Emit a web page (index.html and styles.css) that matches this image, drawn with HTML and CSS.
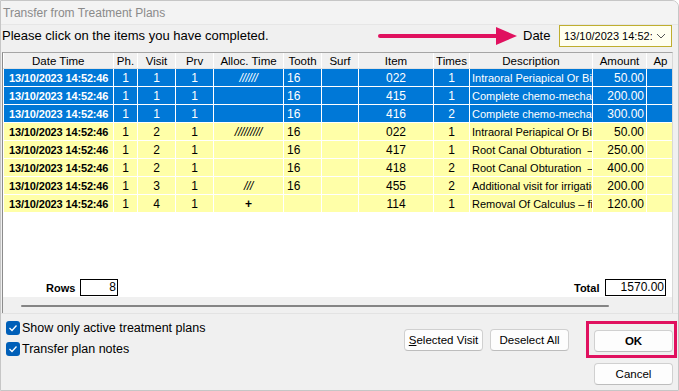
FILE: index.html
```html
<!DOCTYPE html>
<html lang="en">
<head>
    <meta charset="UTF-8">
    <title>Transfer from Treatment Plans</title>
    <link rel="stylesheet" href="styles.css">
</head>
<body>
<div id="wrap">
    <div id="titlebar">Transfer from Treatment Plans</div>
    <div id="toolbar">
        <span class="hint">Please click on the items you have completed.</span>
        <svg class="arrow" width="140" height="20" viewBox="0 0 140 20">
            <line x1="2" y1="10" x2="122" y2="10" stroke="#e0115f" stroke-width="4" stroke-linecap="round"/>
            <polygon points="118,1 139,10 118,19" fill="#e0115f"/>
        </svg>
        <span class="date-label">Date</span>
        <div class="combo">
            <span>13/10/2023 14:52:</span>
            <svg width="10" height="6" viewBox="0 0 10 6"><polyline points="1,1 5,5 9,1" fill="none" stroke="#555" stroke-width="1"/></svg>
        </div>
    </div>

    <div id="grid">
        <div class="view">
            <table class="plans">
                <colgroup>
                    <col style="width:110px"><col style="width:24px"><col style="width:38px"><col style="width:38px">
                    <col style="width:70px"><col style="width:38px"><col style="width:37px"><col style="width:75px">
                    <col style="width:36px"><col style="width:123px"><col style="width:54px"><col style="width:28px">
                </colgroup>
                <thead>
                    <tr>
                        <th>Date Time</th><th>Ph.</th><th>Visit</th><th>Prv</th><th>Alloc. Time</th><th>Tooth</th>
                        <th>Surf</th><th>Item</th><th>Times</th><th>Description</th><th>Amount</th><th>Ap</th>
                    </tr>
                </thead>
                <tbody>
                    <tr class="sel">
                        <td class="dt">13/10/2023 14:52:46</td><td class="c">1</td><td class="c">1</td><td class="c">1</td>
                        <td class="c alloc">//////</td><td>16</td><td></td><td class="c">022</td><td class="c">1</td>
                        <td class="desc">Intraoral Periapical Or Bitewing</td><td class="r">50.00</td><td></td>
                    </tr>
                    <tr class="sel">
                        <td class="dt">13/10/2023 14:52:46</td><td class="c">1</td><td class="c">1</td><td class="c">1</td>
                        <td></td><td>16</td><td></td><td class="c">415</td><td class="c">1</td>
                        <td class="desc">Complete chemo-mechanical</td><td class="r">200.00</td><td></td>
                    </tr>
                    <tr class="sel">
                        <td class="dt">13/10/2023 14:52:46</td><td class="c">1</td><td class="c">1</td><td class="c">1</td>
                        <td></td><td>16</td><td></td><td class="c">416</td><td class="c">2</td>
                        <td class="desc">Complete chemo-mechanical</td><td class="r">300.00</td><td></td>
                    </tr>
                    <tr>
                        <td class="dt">13/10/2023 14:52:46</td><td class="c">1</td><td class="c">2</td><td class="c">1</td>
                        <td class="c alloc">/////////</td><td>16</td><td></td><td class="c">022</td><td class="c">1</td>
                        <td class="desc">Intraoral Periapical Or Bitewing</td><td class="r">50.00</td><td></td>
                    </tr>
                    <tr>
                        <td class="dt">13/10/2023 14:52:46</td><td class="c">1</td><td class="c">2</td><td class="c">1</td>
                        <td></td><td>16</td><td></td><td class="c">417</td><td class="c">1</td>
                        <td class="desc">Root Canal Obturation &nbsp;– one</td><td class="r">250.00</td><td></td>
                    </tr>
                    <tr>
                        <td class="dt">13/10/2023 14:52:46</td><td class="c">1</td><td class="c">2</td><td class="c">1</td>
                        <td></td><td>16</td><td></td><td class="c">418</td><td class="c">2</td>
                        <td class="desc">Root Canal Obturation &nbsp;– add</td><td class="r">400.00</td><td></td>
                    </tr>
                    <tr>
                        <td class="dt">13/10/2023 14:52:46</td><td class="c">1</td><td class="c">3</td><td class="c">1</td>
                        <td class="c alloc">///</td><td>16</td><td></td><td class="c">455</td><td class="c">2</td>
                        <td class="desc">Additional visit for irrigation</td><td class="r">200.00</td><td></td>
                    </tr>
                    <tr>
                        <td class="dt">13/10/2023 14:52:46</td><td class="c">1</td><td class="c">4</td><td class="c">1</td>
                        <td class="c plus">+</td><td></td><td></td><td class="c">114</td><td class="c">1</td>
                        <td class="desc">Removal Of Calculus – first visit</td><td class="r">120.00</td><td></td>
                    </tr>
                </tbody>
            </table>
            <div class="totals">
                <span class="lbl rows-lbl">Rows</span>
                <span class="box rows-box">8</span>
                <span class="lbl total-lbl">Total</span>
                <span class="box total-box">1570.00</span>
            </div>
        </div>
        <div class="hscroll"><div class="thumb"></div></div>
    </div>

    <div id="bottom">
        <div class="checks">
            <label class="check"><span class="tick"><svg width="10" height="8" viewBox="0 0 10 8"><polyline points="1.5,4 4,6.5 8.5,1.5" fill="none" stroke="#fff" stroke-width="1.3"/></svg></span>Show only active treatment plans</label>
            <label class="check"><span class="tick"><svg width="10" height="8" viewBox="0 0 10 8"><polyline points="1.5,4 4,6.5 8.5,1.5" fill="none" stroke="#fff" stroke-width="1.3"/></svg></span>Transfer plan notes</label>
        </div>
        <div class="mid-btns">
            <button class="btn wide"><u>S</u>elected Visit</button>
            <button class="btn wide">Deselect All</button>
        </div>
        <div class="side-btns">
            <button class="btn ok">OK<span class="mark"></span></button>
            <button class="btn">Cancel</button>
        </div>
    </div>
</div>
</body>
</html>
```

FILE: styles.css
```css
body{
    margin: 0;
    font-family: "Liberation Sans", Arial, sans-serif;
    background: #fff;
}
#wrap{
    width: 679px;
    height: 391px;
    box-sizing: border-box;
    border: 1px solid #c6c6c6;
    border-top-right-radius: 7px;
    background: #f0f0f0;
    display: flex;
    flex-direction: column;
    overflow: hidden;
}
#titlebar{
    height: 23px;
    line-height: 24px;
    padding-left: 2px;
    font-size: 12px;
    color: #8a8a8a;
    background: #f3f3f3;
    border-bottom: 1px solid #e6e6e6;
}
#toolbar{
    height: 27px;
    display: flex;
    align-items: flex-start;
}
#toolbar .hint{
    font-size: 13px;
    color: #000;
    line-height: 22px;
    padding-left: 1px;
    flex: 1;
}
#toolbar .arrow{
    margin-top: 1px;
}
#toolbar .date-label{
    font-size: 13px;
    line-height: 22px;
    margin-left: 5px;
    width: 36px;
}
.combo{
    width: 102px;
    height: 20px;
    margin-right: 6px;
    border: 1px solid #bfae2e;
    background: #fffff0;
    display: flex;
    align-items: center;
    justify-content: space-between;
    padding: 0 5px 0 4px;
    box-sizing: content-box;
    font-size: 11px;
    overflow: hidden;
    white-space: nowrap;
}
.combo span{
    width: 88px;
    overflow: hidden;
}
#grid{
    height: 260px;
    margin: 0 5px 0 1px;
    border-top: 1px solid #a5a5a5;
    border-left: 1px solid #8c8c8c;
    border-right: 1px solid #d8d8d8;
    display: flex;
    flex-direction: column;
}
#grid .view{
    flex: 1;
    background: #fff;
    overflow: hidden;
    display: flex;
    flex-direction: column;
}
.plans{
    table-layout: fixed;
    border-collapse: collapse;
    width: 671px;
    font-size: 12px;
}
.plans th{
    height: 15px;
    font-weight: normal;
    font-size: 11.5px;
    background: #f0f0f0;
    border-right: 1px solid #fff;
    border-bottom: 1px solid #e2e2e2;
    padding: 0;
    white-space: nowrap;
    overflow: hidden;
}
.plans td{
    height: 17px;
    padding: 0 3px;
    background: #ffffa8;
    border: 1px solid #fff;
    border-top: none;
    white-space: nowrap;
    overflow: hidden;
    color: #000;
}
.plans tr.sel td{
    background: #0078d7;
    color: #fff;
}
.plans td.dt{
    font-weight: bold;
    font-size: 11px;
    letter-spacing: -0.15px;
    padding-left: 5px;
}
.plans td.c{
    text-align: center;
}
.plans td.r{
    text-align: right;
    padding-right: 2px;
}
.plans td.desc{
    font-size: 11px;
    padding-left: 2px;
    text-overflow: clip;
}
.plans td.alloc{
    font-style: italic;
    font-size: 12px;
    letter-spacing: -0.3px;
}
.plans td.plus{
    font-weight: bold;
}
.totals{
    margin-top: auto;
    height: 19px;
    display: flex;
    align-items: center;
    font-size: 11px;
}
.totals .lbl{
    font-weight: bold;
}
.rows-lbl{
    margin-left: 43px;
    width: 34px;
}
.box{
    height: 15px;
    line-height: 15px;
    border: 1px solid #000;
    text-align: right;
    padding-right: 1px;
    font-size: 12px;
}
.rows-box{
    width: 35px;
}
.total-lbl{
    margin-left: auto;
    width: 31px;
}
.total-box{
    width: 58px;
    margin-right: 6px;
}
.hscroll{
    height: 16px;
    display: flex;
    align-items: center;
}
.hscroll .thumb{
    height: 2px;
    width: 588px;
    margin-left: 18px;
    margin-top: 1px;
    background: #858585;
    border-radius: 1px;
}
#bottom{
    flex: 1;
    display: flex;
    border-top: 1px solid #e3e3e3;
}
.checks{
    display: flex;
    flex-direction: column;
    gap: 7px;
    padding: 7px 0 0 5px;
}
.check{
    display: flex;
    align-items: center;
    font-size: 12.5px;
    line-height: 14px;
}
.tick{
    width: 14px;
    height: 14px;
    border-radius: 3px;
    background: #005fb8;
    display: flex;
    align-items: center;
    justify-content: center;
    margin-right: 2px;
}
.mid-btns{
    margin-left: auto;
    margin-top: 15px;
    display: flex;
    gap: 7px;
    align-self: flex-start;
}
.side-btns{
    margin: 16px 5px 0 25px;
    display: flex;
    flex-direction: column;
    gap: 11px;
}
.btn{
    width: 79px;
    height: 22px;
    font-family: "Liberation Sans", Arial, sans-serif;
    font-size: 11.5px;
    color: #000;
    background: #fdfdfd;
    border: 1px solid #d0d0d0;
    border-bottom-color: #bdbdbd;
    border-radius: 4px;
    padding: 0;
}
.btn.wide{
    width: 79px;
}
.btn u{
    text-decoration: underline;
}
.btn.ok{
    font-weight: bold;
    position: relative;
}
.btn.ok .mark{
    position: absolute;
    left: -9px;
    top: -10px;
    width: 85px;
    height: 31px;
    border: 3px solid #e0115f;
}
```
